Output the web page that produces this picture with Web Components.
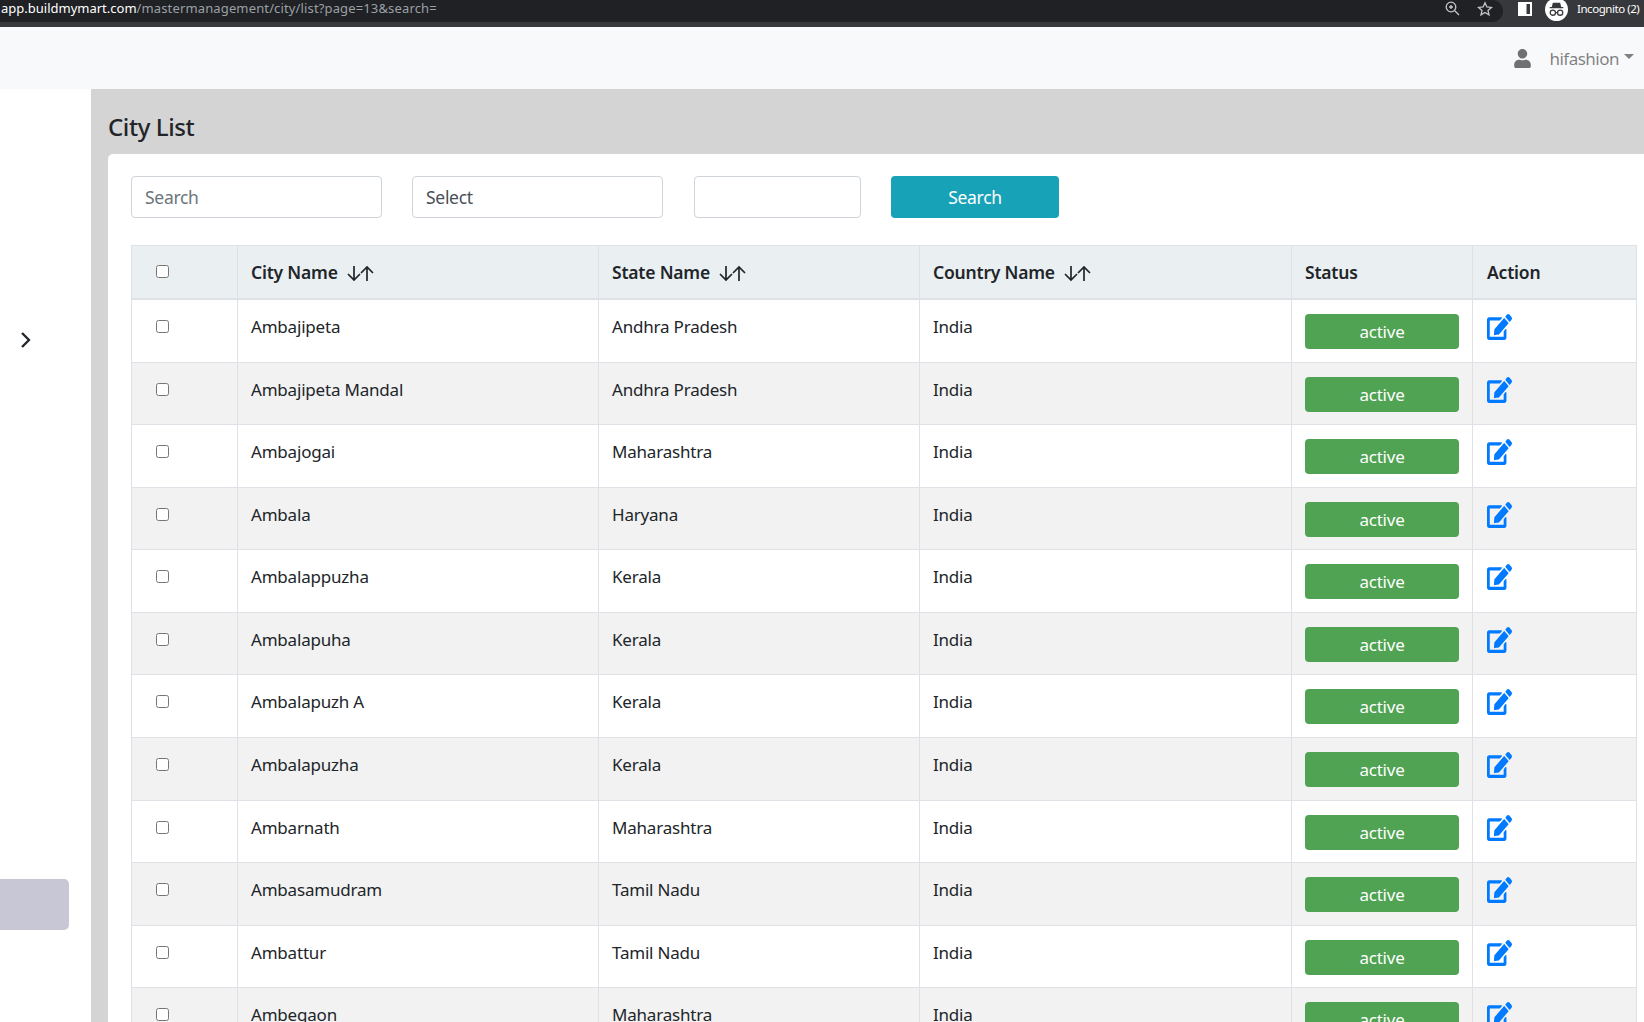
<!DOCTYPE html>
<html>
<head>
<meta charset="utf-8">
<title>City List</title>
<style>
  html, body { margin: 0; height: 100%; overflow: hidden; background: #fff; }
  body { font-family: "Noto Sans", "Open Sans", sans-serif; color: #212529; display: flex; flex-direction: column; height: 1022px; }
  .main { display: flex; flex: 1; min-height: 0; }
</style>
</head>
<body>
<browser-bar></browser-bar>
<top-nav>hifashion</top-nav>
<div class="main">
  <side-rail></side-rail>
  <content-panel heading="City List">
    <filter-bar></filter-bar>
    <city-table></city-table>
  </content-panel>
</div>

<script>
// components
class BrowserBar extends HTMLElement {
  connectedCallback() {
    this.attachShadow({ mode: 'open' });
    this.shadowRoot.innerHTML = `
      <style>
        :host { display: flex; height: 27px; background: #37383b; font-size: 13px; overflow: hidden; flex: none; }
        .pill { flex: 1; height: 22px; background: #202124; border-radius: 0 11px 11px 0; display: flex; align-items: center; padding: 0 10px 0 1px; box-sizing: border-box; }
        .url { margin-top: -6px; white-space: nowrap; }
        .host { color: #fff; }
        .path { color: #9aa0a6; letter-spacing: .14px; }
        .spacer { flex: 1; }
        .tools { display: flex; align-items: center; gap: 16px; margin-top: -5px; }
        .right { display: flex; align-items: center; height: 22px; color: #fff; }
        .panel { width: 14px; height: 14px; margin: -5px 13px 0 15px; }
        .badge { width: 23px; height: 23px; margin-right: 9px; margin-top: -4px; flex: none; }
        .label { white-space: nowrap; width: 67px; font-size: 11.500px; letter-spacing: -.45px; margin-top: -6px; }
        svg { display: block; }
      </style>
      <div class="pill">
        <span class="url"><span class="host">app.buildmymart.com</span><span class="path">/mastermanagement/city/list?page=13&amp;search=</span></span>
        <div class="spacer"></div>
        <div class="tools">
          <svg width="17" height="17" viewBox="0 0 17 17" fill="none" stroke="#c4c7c5" stroke-width="1.300"><circle cx="7" cy="7" r="4.800"/><path d="M10.500 10.500 15 15M5 7h4M7 5v4"/></svg>
          <svg width="16" height="16" viewBox="0 0 16 16" fill="none" stroke="#c4c7c5" stroke-width="1.300"><path d="M8 1.800 9.900 6l4.500.4-3.400 3 1 4.500L8 11.500l-4 2.400 1-4.500-3.400-3L6.100 6z"/></svg>
        </div>
      </div>
      <div class="right">
        <svg class="panel" viewBox="0 0 14 14"><path fill="#fff" d="M0 0h14v14H0z"/><path fill="#37383b" d="M8.500 2H12v10H8.500z"/></svg>
        <svg class="badge" viewBox="0 0 22 22"><circle cx="11" cy="11" r="11" fill="#fff"/><path fill="#37383b" d="M7.500 4.500h7l1 4h2v1.200h-13V8.500h2z"/><g fill="none" stroke="#37383b" stroke-width="1.200"><circle cx="7.500" cy="14" r="2.500"/><circle cx="14.500" cy="14" r="2.500"/><path d="M10 14h2"/></g></svg>
        <span class="label">Incognito (2)</span>
      </div>`;
  }
}

class TopNav extends HTMLElement {
  connectedCallback() {
    this.attachShadow({ mode: 'open' });
    this.shadowRoot.innerHTML = `
      <style>
        :host { display: flex; justify-content: flex-end; align-items: center; height: 62px; flex: none; background: #f8f9fa; padding-right: 10px; font-size: 17px; letter-spacing: -.5px; color: rgba(0,0,0,.5); }
        svg { display: block; }
        .user { margin-right: 17px; }
        .caret { width: 0; height: 0; margin-left: 5px; margin-top: -3px; border-top: 5px solid #7f8081; border-left: 5px solid transparent; border-right: 5px solid transparent; }
      </style>
      <svg class="user" width="19" height="19" viewBox="0 0 448 512" fill="#6f7072"><path d="M224 256c70.700 0 128-57.300 128-128S294.700 0 224 0 96 57.300 96 128s57.300 128 128 128zm89.600 32h-16.700c-22.200 10.200-46.900 16-72.900 16s-50.600-5.800-72.900-16h-16.700C60.200 288 0 348.200 0 422.400V464c0 26.500 21.500 48 48 48h352c26.500 0 48-21.500 48-48v-41.600c0-74.200-60.200-134.400-134.400-134.400z"/></svg>
      <slot></slot>
      <div class="caret"></div>`;
  }
}

class SideRail extends HTMLElement {
  connectedCallback() {
    this.attachShadow({ mode: 'open' });
    this.shadowRoot.innerHTML = `
      <style>
        :host { display: block; width: 91px; flex: none; background: #fff; padding-top: 242px; box-sizing: border-box; }
        svg { display: block; margin-left: 20px; }
        .box { width: 69px; height: 51px; margin-top: 530px; background: #c8c7d5; border-radius: 0 5px 5px 0; }
      </style>
      <svg width="11" height="18" viewBox="0 0 11 18" fill="none" stroke="#212529" stroke-width="2.300"><path d="M2 2l7 7-7 7"/></svg>
      <div class="box"></div>`;
  }
}

class ContentPanel extends HTMLElement {
  connectedCallback() {
    this.attachShadow({ mode: 'open' });
    this.shadowRoot.innerHTML = `
      <style>
        :host { display: block; flex: 1; min-width: 0; background: #d4d4d4; padding: 21px 0 0 17px; overflow: hidden; }
        h1 { margin: 0 0 11px; font-size: 24px; line-height: 33px; font-weight: 500; letter-spacing: -.4px; color: #212529; }
        .card { background: #fff; border-radius: 5px 0 0 0; padding: 22px 7px 0 23px; height: 900px; box-sizing: border-box; }
      </style>
      <h1>${this.getAttribute('heading')}</h1>
      <div class="card"><slot></slot></div>`;
  }
}

class FilterBar extends HTMLElement {
  connectedCallback() {
    this.attachShadow({ mode: 'open' });
    this.shadowRoot.innerHTML = `
      <style>
        :host { display: flex; height: 42px; margin-bottom: 27px; font-size: 17.500px; letter-spacing: -.3px; }
        .field { box-sizing: border-box; height: 42px; border: 1px solid #ced4da; border-radius: 4px; padding: 0 13px; display: flex; align-items: center; color: #6c757d; background: #fff; }
        .a { width: 251px; margin-right: 30px; }
        .b { width: 251px; margin-right: 31px; color: #495057; }
        .c { width: 167px; margin-right: 30px; }
        .go { width: 168px; height: 42px; background: #17a2b8; color: #fff; border-radius: 4px; display: flex; align-items: center; justify-content: center; }
      </style>
      <div class="field a">Search</div>
      <div class="field b">Select</div>
      <div class="field c"></div>
      <div class="go">Search</div>`;
  }
}

const CITIES = [
  ['Ambajipeta', 'Andhra Pradesh'],
  ['Ambajipeta Mandal', 'Andhra Pradesh'],
  ['Ambajogai', 'Maharashtra'],
  ['Ambala', 'Haryana'],
  ['Ambalappuzha', 'Kerala'],
  ['Ambalapuha', 'Kerala'],
  ['Ambalapuzh A', 'Kerala'],
  ['Ambalapuzha', 'Kerala'],
  ['Ambarnath', 'Maharashtra'],
  ['Ambasamudram', 'Tamil Nadu'],
  ['Ambattur', 'Tamil Nadu'],
  ['Ambegaon', 'Maharashtra']
];

const SORT = `<svg class="sort" width="27" height="17" viewBox="0 0 27 17" fill="none" stroke="#212529" stroke-width="1.700"><path d="M7 1v14M1 9l6 6 6-6M20 16V2M14 8l6-6 6 6"/></svg>`;
const EDIT = `<svg class="edit" width="25" height="26" viewBox="0 0 576 512" preserveAspectRatio="none" fill="#007bff"><path d="M402.600 83.200l90.200 90.200c3.800 3.800 3.800 10 0 13.800L274.400 405.600l-92.800 10.300c-12.400 1.400-22.900-9.100-21.500-21.500l10.300-92.800L388.800 83.200c3.800-3.800 10-3.800 13.800 0zm162-22.900l-48.800-48.800c-15.200-15.200-39.900-15.200-55.200 0l-35.400 35.400c-3.800 3.800-3.800 10 0 13.800l90.200 90.200c3.800 3.800 10 3.800 13.800 0l35.400-35.400c15.200-15.300 15.200-40 0-55.200zM384 346.200V448H64V128h229.800c3.200 0 6.200-1.300 8.500-3.500l40-40c7.600-7.600 2.200-20.500-8.500-20.500H48C21.500 64 0 85.500 0 112v352c0 26.500 21.500 48 48 48h352c26.500 0 48-21.500 48-48V306.200c0-10.700-12.900-16-20.500-8.500l-40 40c-2.200 2.300-3.500 5.300-3.500 8.500z"/></svg>`;

class CityTable extends HTMLElement {
  connectedCallback() {
    this.attachShadow({ mode: 'open' });
    const rows = CITIES.map(([city, state]) => `
      <tr>
        <td class="check"><input type="checkbox"></td>
        <td>${city}</td>
        <td>${state}</td>
        <td>India</td>
        <td class="status"><div class="active">active</div></td>
        <td class="action">${EDIT}</td>
      </tr>`).join('');
    this.shadowRoot.innerHTML = `
      <style>
        :host { display: block; width: 1505px; font-size: 17px; letter-spacing: -.2px; }
        table { border-collapse: collapse; table-layout: fixed; width: 1505px; }
        th, td { border: 1px solid #dee2e6; padding: 14px 13px 0; text-align: left; vertical-align: top; line-height: 26px; box-sizing: border-box; }
        thead th { background: #eaeff2; height: 53px; padding-top: 13px; border-bottom-width: 2px; font-weight: 600; font-size: 17.500px; white-space: nowrap; }
        tbody tr { height: 62.600px; }
        tbody tr:first-child { height: 63.500px; }
        tbody tr:nth-child(even) td { background: #f2f2f2; }
        input { display: block; width: 13px; height: 13px; margin: 0; }
        .check { padding: 20px 0 0 24px; }
        thead th.check { padding: 19px 0 0 24px; }
        .sort { vertical-align: -3px; margin-left: 5px; }
        td.status { padding-top: 14px; }
        .active { width: 154px; height: 35px; padding-top: 1px; box-sizing: border-box; background: #4fa352; color: #fff; border-radius: 4px; display: flex; align-items: center; justify-content: center; }
        .edit { display: block; }
        td.action { padding: 14px 0 0 14px; }
        th:last-child { padding-left: 14px; }
      </style>
      <table>
        <colgroup><col style="width:106px"><col style="width:361px"><col style="width:321px"><col style="width:372px"><col style="width:181px"><col style="width:164px"></colgroup>
        <thead><tr>
          <th class="check"><input type="checkbox"></th>
          <th>City Name ${SORT}</th>
          <th>State Name ${SORT}</th>
          <th>Country Name ${SORT}</th>
          <th>Status</th>
          <th>Action</th>
        </tr></thead>
        <tbody>${rows}</tbody>
      </table>`;
  }
}

customElements.define('browser-bar', BrowserBar);
customElements.define('top-nav', TopNav);
customElements.define('side-rail', SideRail);
customElements.define('content-panel', ContentPanel);
customElements.define('filter-bar', FilterBar);
customElements.define('city-table', CityTable);
</script>
</body>
</html>
